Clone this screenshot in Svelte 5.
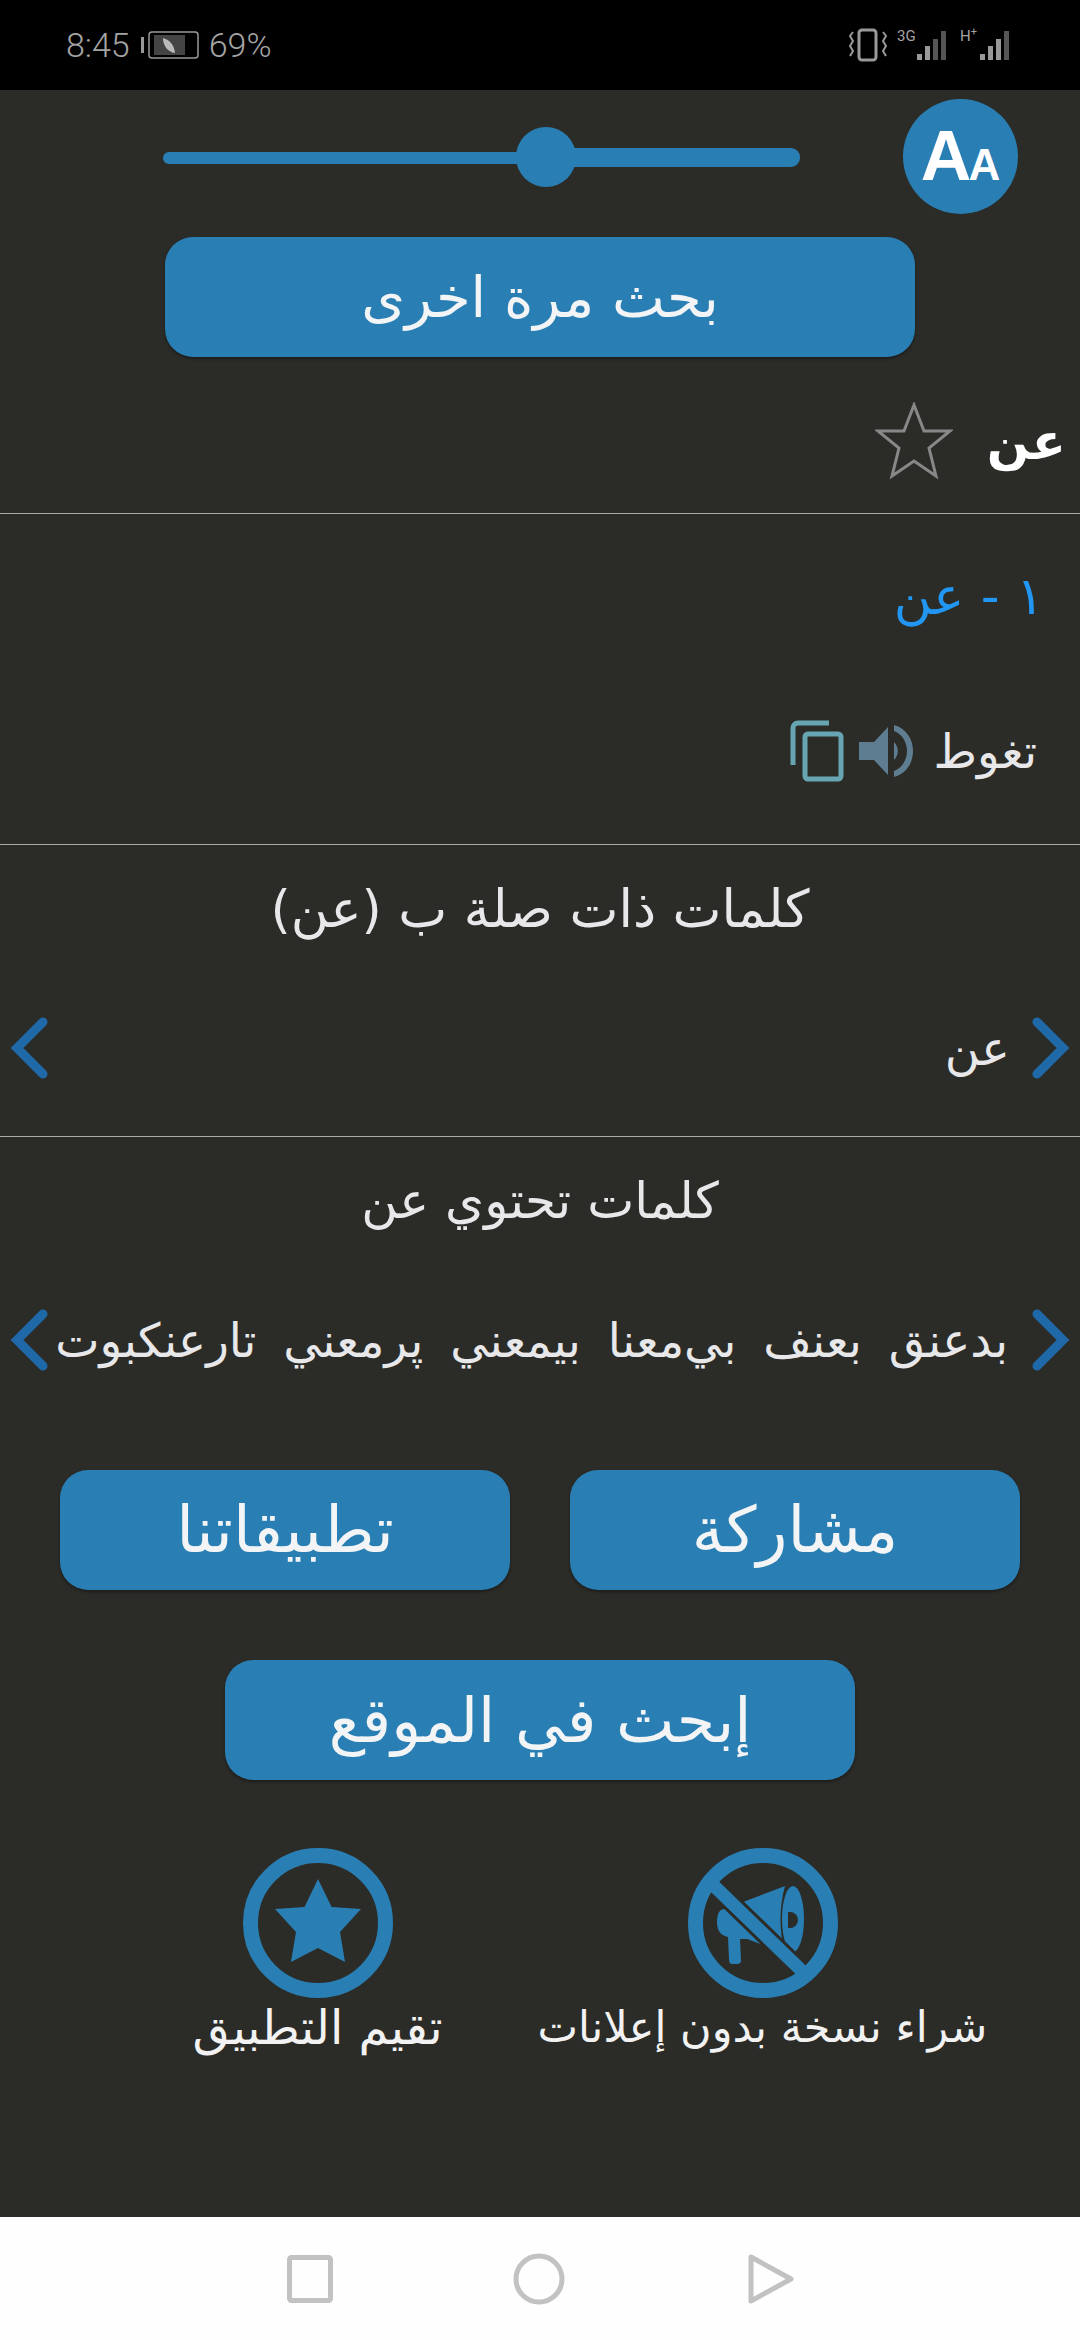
<script lang="ts">
  const relatedWords = 'بدعنق بعنف بي‌معنا بيمعني پرمعني تارعنكبوت';
</script>

<div class="screen">
  <div class="status-bar">
    <div class="status-left">
      <span>8:45</span>
      <i class="batt-tick"></i>
      <svg class="batt" width="51" height="28" viewBox="0 0 51 28">
        <rect x="1" y="1" width="49" height="26" rx="3" fill="none" stroke="#999" stroke-width="1.5" />
        <rect x="6" y="4" width="31" height="20" fill="#444" />
        <path d="M15 7c7 2 11 7 12 15-7-1-12-7-12-15z" fill="#bbb" />
      </svg>
      <span>69%</span>
    </div>
    <div class="status-right">
      <svg width="40" height="34" viewBox="0 0 40 34" fill="none" stroke="#999">
        <rect x="11" y="2" width="17" height="30" rx="3" stroke-width="3" />
        <path d="M5 4 2 8l3 5-3 5 3 5-3 5M35 4l3 4-3 5 3 5-3 5 3 5" stroke-width="2" />
      </svg>
      <div class="net">
        <small>3G</small>
        <svg width="34" height="32" viewBox="0 0 34 32" fill="#999">
          <rect x="0" y="25" width="5" height="6" />
          <rect x="8" y="17" width="5" height="14" />
          <rect x="16" y="10" width="5" height="21" fill="#555" />
          <rect x="24" y="2" width="5" height="29" fill="#555" />
        </svg>
      </div>
      <div class="net">
        <small>H<sup>+</sup></small>
        <svg width="34" height="32" viewBox="0 0 34 32" fill="#999">
          <rect x="0" y="25" width="5" height="6" />
          <rect x="8" y="17" width="5" height="14" />
          <rect x="16" y="10" width="5" height="21" />
          <rect x="24" y="2" width="5" height="29" fill="#555" />
        </svg>
      </div>
    </div>
  </div>

  <main class="content">
    <div class="top-row">
      <div class="slider">
        <div class="track-left"></div>
        <div class="track-right"></div>
        <div class="thumb"></div>
      </div>
      <div class="aa"><span>A</span><span class="small-a">A</span></div>
    </div>

    <div class="center-row">
      <button class="btn search-again">بحث مرة اخرى</button>
    </div>

    <div class="word-row">
      <span class="word">عن</span>
      <svg class="star" width="78" height="78" viewBox="0 0 78 78" fill="none" stroke="#888" stroke-width="3">
        <path d="M39 3l10 26h26L54 46l7 28-22-15-22 15 7-28L3 29h26z" />
      </svg>
    </div>

    <section class="entry">
      <div class="entry-title">١ - عن</div>
      <div class="entry-line">
        <span class="meaning">تغوط</span>
        <svg width="56" height="56" viewBox="0 0 56 56">
          <path d="M1 19h15L30 4v48L16 37H1z" fill="#5f7d90" />
          <path d="M36 19c5 5 5 13 0 18z" fill="#5f7d90" />
          <path d="M36 2c12 3 19 14 19 26s-7 23-19 26v-6c8-3 13-11 13-20S44 11 36 8z" fill="#5f7d90" />
        </svg>
        <svg width="54" height="62" viewBox="0 0 54 62" fill="none" stroke="#67a5b2" stroke-width="5">
          <path d="M39 3H8a5 5 0 0 0-5 5v37" />
          <rect x="15" y="14" width="36" height="45" rx="3" />
        </svg>
      </div>
    </section>

    <section class="group">
      <h2>كلمات ذات صلة ب (عن)</h2>
      <div class="pager">
        <svg class="chev" width="40" height="62" viewBox="0 0 40 62"><path d="M6 5l26 26L6 57" /></svg>
        <span class="pager-text">عن</span>
        <svg class="chev" width="40" height="62" viewBox="0 0 40 62"><path d="M34 5L8 31l26 26" /></svg>
      </div>
    </section>

    <section class="group last">
      <h2 class="contains">كلمات تحتوي عن</h2>
      <div class="pager">
        <svg class="chev" width="40" height="62" viewBox="0 0 40 62"><path d="M6 5l26 26L6 57" /></svg>
        <span class="pager-text long">{relatedWords}</span>
        <svg class="chev" width="40" height="62" viewBox="0 0 40 62"><path d="M34 5L8 31l26 26" /></svg>
      </div>
    </section>

    <div class="btn-pair">
      <button class="btn wide">مشاركة</button>
      <button class="btn wide">تطبيقاتنا</button>
    </div>

    <div class="center-row site">
      <button class="btn site-btn">إبحث في الموقع</button>
    </div>

    <div class="extras">
      <div class="extra">
        <svg width="152" height="152" viewBox="0 0 152 152">
          <path d="M38 62L98 39c-6 21-6 46 0 67L60 92h-7l1 22q0 3-4 3h-5q-3 0-3-5l-1-22q-11-2-11-15t8-13z" fill="#297fb4" />
          <ellipse cx="106" cy="72" rx="11" ry="33" fill="#297fb4" />
          <path d="M101 65h2a8 8 0 0 1 0 16h-2z" fill="#2b2c28" />
          <path d="M24 36l92 89" stroke="#2b2c28" stroke-width="19" />
          <path d="M24 36l92 89" stroke="#297fb4" stroke-width="13" />
          <circle cx="76" cy="76" r="67.5" fill="none" stroke="#297fb4" stroke-width="15" />
        </svg>
        <span class="ad-label">شراء نسخة بدون إعلانات</span>
      </div>
      <div class="extra">
        <svg width="152" height="152" viewBox="0 0 152 152">
          <circle cx="76" cy="76" r="67.5" fill="none" stroke="#297fb4" stroke-width="15" />
          <path d="M76 32l13.600 28 29.400 2-21 23 5 30-27-14-27 14 5-30-21-23 29.500-2z" fill="#297fb4" />
        </svg>
        <span class="rate-label">تقيم التطبيق</span>
      </div>
    </div>
  </main>

  <nav class="nav-bar">
    <svg width="46" height="48" viewBox="0 0 46 48"><rect x="2.500" y="2.500" width="41" height="43" rx="2" /></svg>
    <svg width="52" height="52" viewBox="0 0 52 52"><circle cx="26" cy="26" r="23" /></svg>
    <svg class="back" width="46" height="52" viewBox="0 0 46 52"><path d="M3 4v44l40-22z" stroke-linejoin="round" /></svg>
  </nav>
</div>

<style>
  :global(body) {
    margin: 0;
    background: #2b2c28;
  }

  .screen {
    width: 1080px;
    height: 2340px;
    display: flex;
    flex-direction: column;
    overflow: hidden;
    font-family: "DejaVu Sans", sans-serif;
    color: #e8e8ea;
  }

  .status-bar {
    height: 90px;
    flex: none;
    background: #000;
    display: flex;
    align-items: center;
    justify-content: space-between;
    padding: 0 66px;
    box-sizing: border-box;
    color: #a4a4a4;
    font: 300 34px "Roboto", sans-serif;
  }

  .status-left,
  .status-right {
    display: flex;
    align-items: center;
    gap: 4px;
  }

  .status-right {
    gap: 9px;
  }

  .batt-tick {
    width: 3px;
    height: 16px;
    background: #999;
    margin-left: 7px;
  }

  .batt {
    margin-right: 6px;
  }

  .net {
    display: flex;
    align-items: flex-start;
  }

  .net small {
    font-size: 15px;
    line-height: 14px;
    width: 20px;
    font-weight: 400;
  }

  .net sup {
    font-size: 11px;
    line-height: 0;
  }

  .content {
    flex: 1;
    display: flex;
    flex-direction: column;
  }

  .top-row {
    height: 147px;
    flex: none;
    display: flex;
    align-items: center;
    padding: 0 62px 0 163px;
    justify-content: space-between;
    box-sizing: border-box;
  }

  .slider {
    position: relative;
    width: 637px;
    height: 60px;
    margin-bottom: 13px;
  }

  .track-left,
  .track-right {
    position: absolute;
    background: #297fb4;
  }

  .track-left {
    left: 0;
    width: 360px;
    top: 25px;
    height: 12px;
    border-radius: 6px 0 0 6px;
  }

  .track-right {
    left: 360px;
    right: 0;
    top: 21px;
    height: 19px;
    border-radius: 0 9px 9px 0;
  }

  .thumb {
    position: absolute;
    left: 353px;
    top: 0;
    width: 60px;
    height: 60px;
    border-radius: 50%;
    background: #297fb4;
  }

  .aa {
    width: 115px;
    height: 115px;
    border-radius: 50%;
    background: #297fb4;
    display: flex;
    align-items: baseline;
    justify-content: center;
    color: #fff;
    font: bold 70px/115px "Liberation Sans", sans-serif;
    margin-bottom: 15px;
  }

  .small-a {
    font-size: 44px;
    margin-left: -3px;
  }

  .center-row {
    display: flex;
    justify-content: center;
    flex: none;
  }

  .btn {
    height: 120px;
    background: #297fb4;
    border: none;
    border-radius: 28px;
    color: #f2f4f6;
    font-family: "DejaVu Sans", sans-serif;
    font-size: 56px;
    padding: 0;
    box-shadow: 0 2px 3px rgba(0, 0, 0, 0.35);
  }

  .search-again {
    width: 750px;
  }

  .word-row {
    direction: rtl;
    height: 157px;
    flex: none;
    box-sizing: border-box;
    display: flex;
    align-items: center;
    gap: 34px;
    padding: 0 14px;
    border-bottom: 1px solid #a9a9a6;
  }

  .word {
    font-size: 50px;
    font-weight: bold;
    color: #fff;
    margin-top: 14px;
  }

  .star {
    margin-top: 12px;
  }

  .entry {
    height: 331px;
    flex: none;
    direction: rtl;
    box-sizing: border-box;
    border-bottom: 1px solid #a9a9a6;
    padding: 0 36px 0 43px;
  }

  .entry-title {
    color: #2196f3;
    font-size: 52px;
    height: 164px;
    display: flex;
    align-items: center;
  }

  .entry-line {
    display: flex;
    align-items: center;
    gap: 14px;
    height: 146px;
    font-size: 47px;
  }

  .meaning {
    margin-right: 7px;
    margin-left: 5px;
  }

  .group {
    height: 292px;
    flex: none;
    box-sizing: border-box;
    border-bottom: 1px solid #a9a9a6;
  }

  .group.last {
    height: 333px;
    border-bottom: none;
  }

  .group h2 {
    margin: 0;
    height: 128px;
    direction: rtl;
    display: flex;
    align-items: center;
    justify-content: center;
    font-size: 52px;
    font-weight: normal;
  }

  .group h2.contains {
    font-size: 50px;
  }

  .pager {
    display: flex;
    flex-direction: row-reverse;
    align-items: center;
    height: 150px;
    padding: 0 9px;
    gap: 9px;
  }

  .chev {
    flex: none;
    fill: none;
    stroke: #2069a8;
    stroke-width: 9;
    stroke-linecap: round;
  }

  .pager-text {
    direction: rtl;
    flex: 1;
    min-width: 0;
    margin-right: 12px;
    font-size: 48px;
    white-space: nowrap;
  }

  .pager-text.long {
    margin-right: 14px;
    font-size: 47px;
    word-spacing: 12px;
  }

  .btn-pair {
    direction: rtl;
    display: flex;
    justify-content: center;
    gap: 60px;
    flex: none;
  }

  .wide {
    width: 450px;
    font-size: 64px;
  }

  .site {
    margin-top: 70px;
  }

  .site-btn {
    width: 630px;
    font-size: 62px;
  }

  .extras {
    direction: rtl;
    display: grid;
    grid-template-columns: 445px 445px;
    justify-content: center;
    margin-top: 67px;
  }

  .extra {
    display: flex;
    flex-direction: column;
    align-items: center;
    line-height: 56px;
    color: #f2f2f2;
    white-space: nowrap;
  }

  .ad-label {
    font-size: 43px;
  }

  .rate-label {
    font-size: 48px;
  }

  .nav-bar {
    height: 123px;
    flex: none;
    background: #fefefe;
    display: flex;
    align-items: center;
    justify-content: center;
    gap: 180px;
  }

  .nav-bar svg {
    fill: none;
    stroke: #c2c2c2;
    stroke-width: 5;
  }

  .nav-bar .back {
    margin-left: 3px;
  }
</style>
